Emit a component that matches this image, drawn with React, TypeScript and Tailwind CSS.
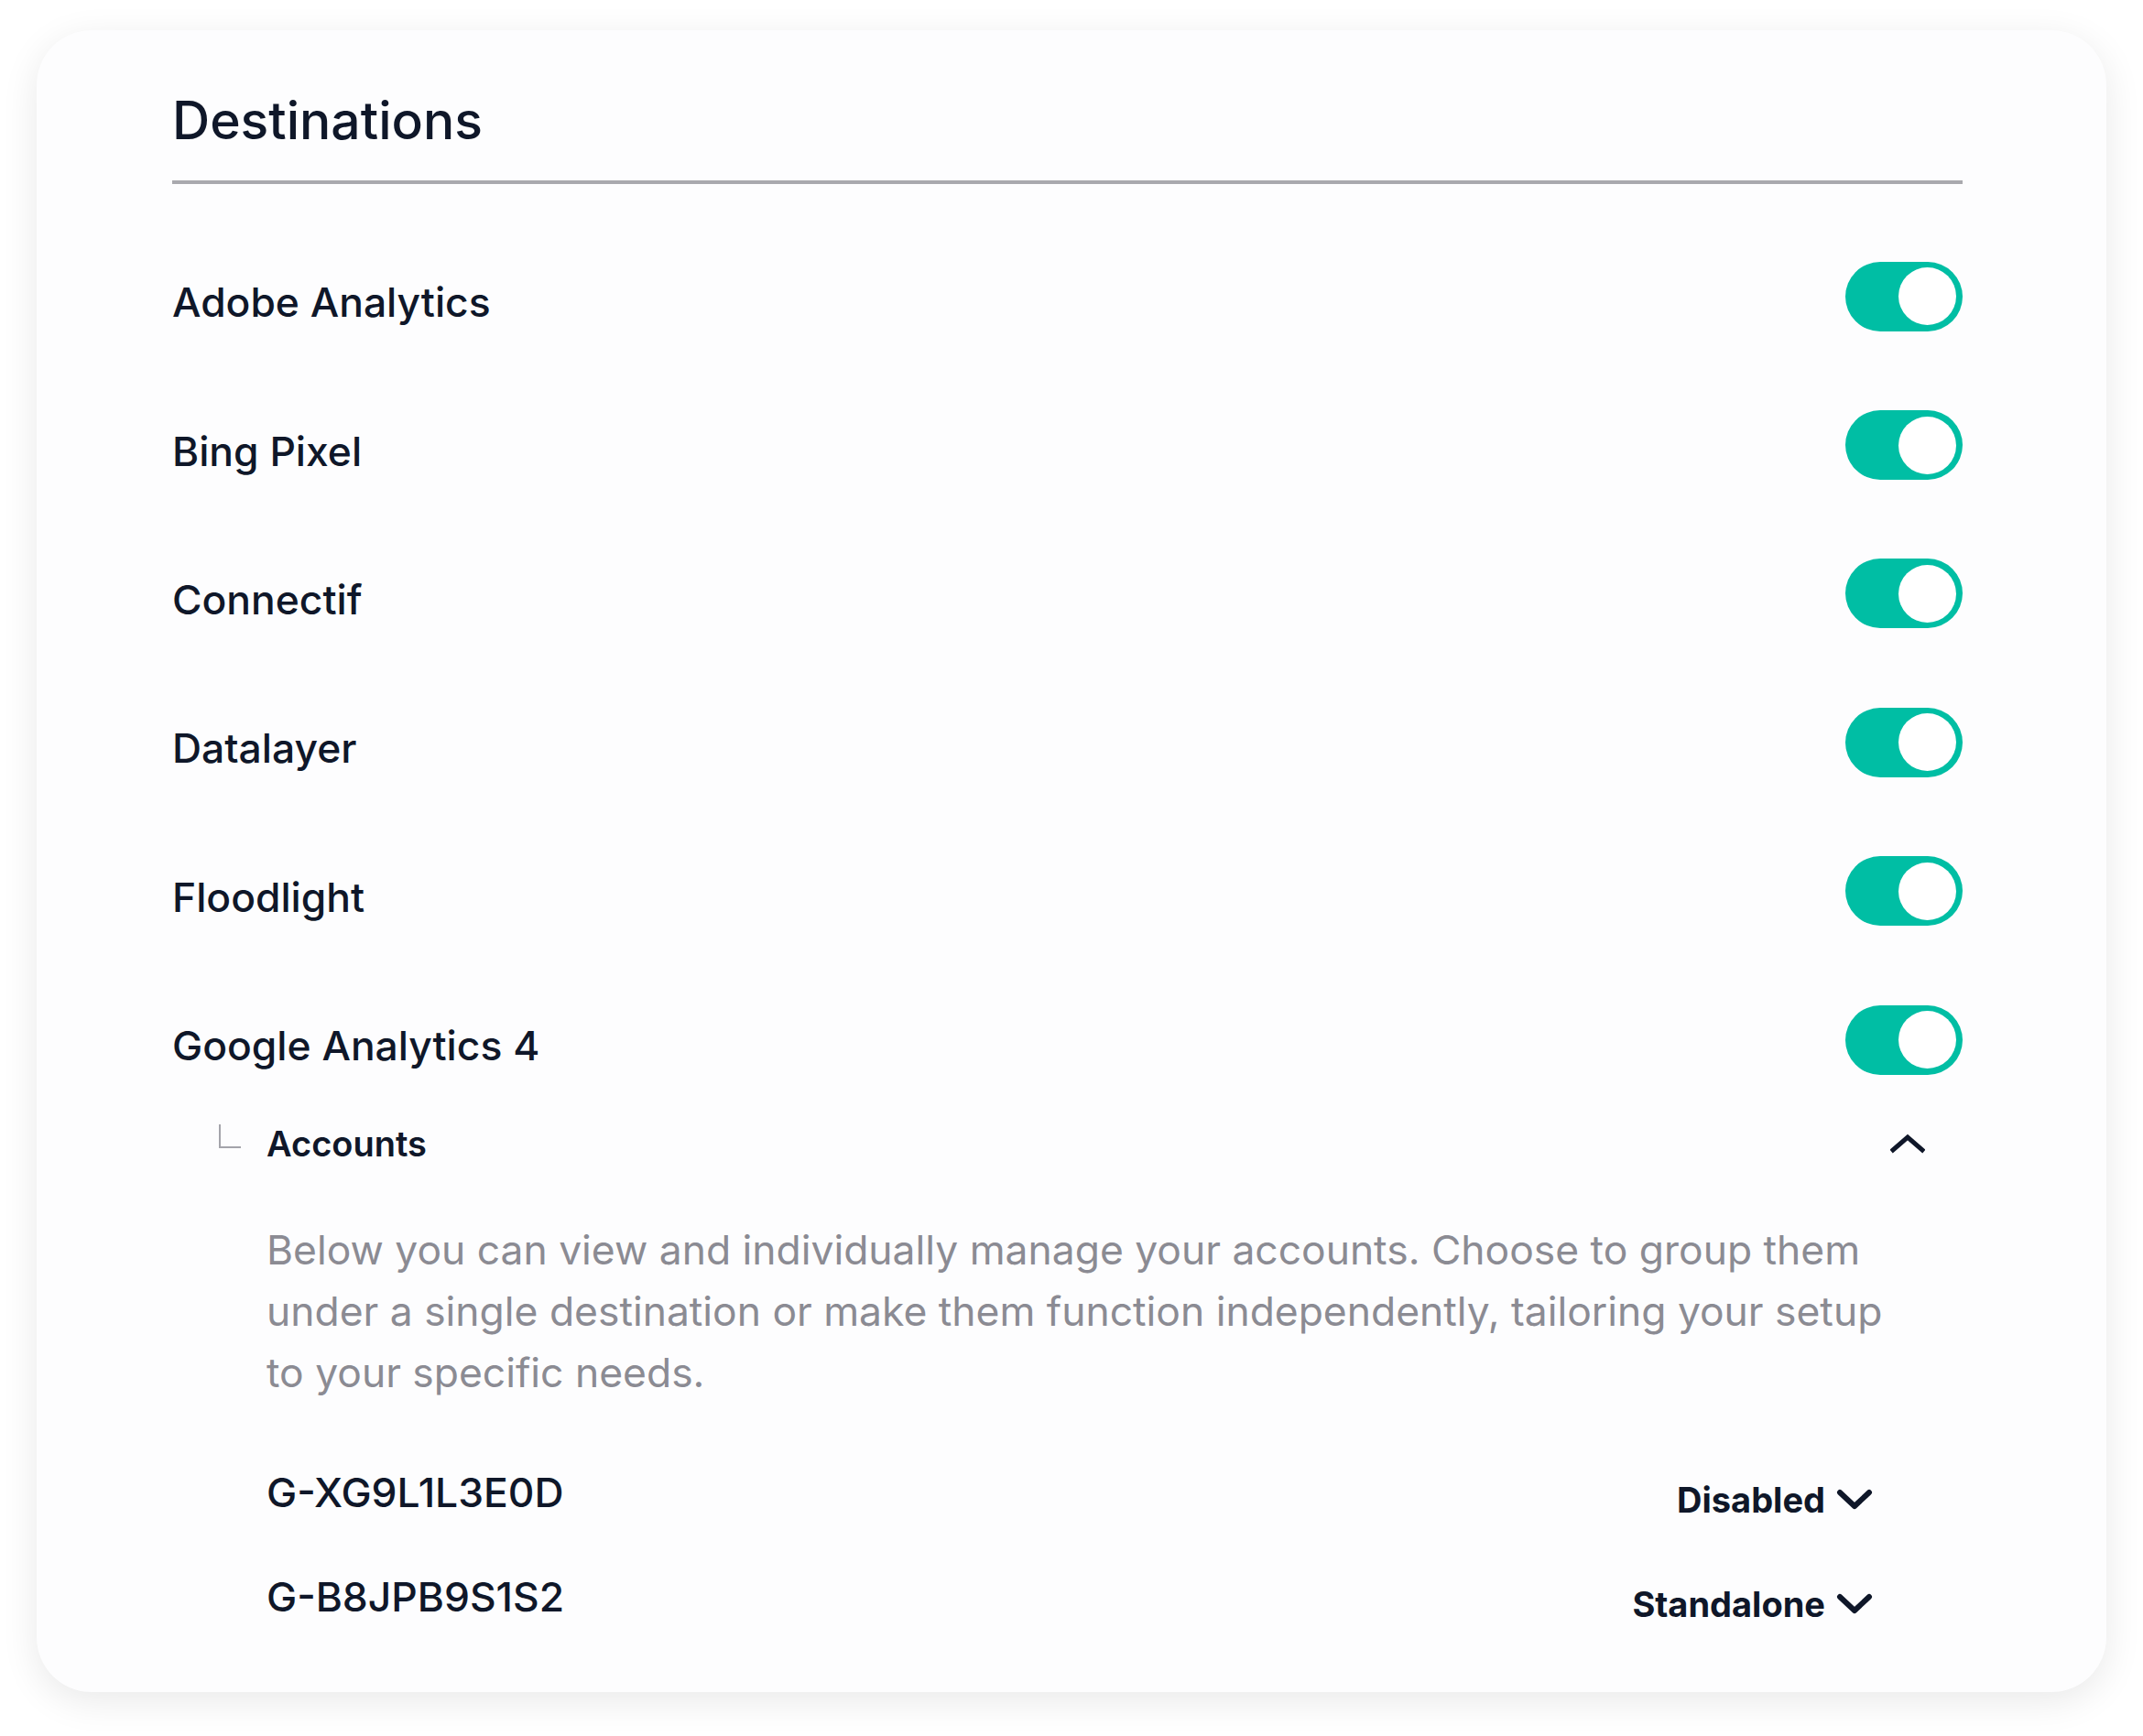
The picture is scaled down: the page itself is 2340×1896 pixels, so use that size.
import React from "react";

const rows = [
  "Adobe Analytics",
  "Bing Pixel",
  "Connectif",
  "Datalayer",
  "Floodlight",
  "Google Analytics 4",
];

function Toggle() {
  return (
    <div className="mb-[13px] flex h-[76px] w-[128px] shrink-0 items-center justify-end rounded-full bg-[#00bea4] pr-[7px]">
      <div className="h-[63px] w-[63px] rounded-full bg-white" />
    </div>
  );
}

function ChevronDown() {
  return (
    <svg width="40" height="24" viewBox="0 0 40 24" fill="none" className="shrink-0">
      <polyline
        points="4,4 20,19 36,4"
        stroke="#0f1729"
        strokeWidth="6"
        strokeLinecap="round"
        strokeLinejoin="round"
      />
    </svg>
  );
}

function ChevronUp() {
  return (
    <svg width="38" height="22" viewBox="0 0 38 22" fill="none" className="shrink-0">
      <polyline
        points="3,18 19,4 35,18"
        stroke="#0f1729"
        strokeWidth="5"
        strokeLinecap="square"
        strokeLinejoin="miter"
      />
    </svg>
  );
}

function AccountRow({ id, mode }: { id: string; mode: string }) {
  return (
    <div className="flex h-[114px] items-center justify-between pl-[103px] pr-[98px]">
      <span className="text-[44.4px] font-medium leading-[52px] text-[#0f1729]">{id}</span>
      <div className="mt-[15px] flex items-center gap-[12px]">
        <span className="text-[38px] font-bold leading-[46px] text-[#0f1729]">{mode}</span>
        <ChevronDown />
      </div>
    </div>
  );
}

export default function App() {
  return (
    <div
      className="min-h-screen bg-white px-[40px] pt-[33px] pb-[50px]"
      style={{ fontFamily: "Inter, 'Noto Sans', 'Liberation Sans', sans-serif" }}
    >
      <div className="rounded-[60px] bg-[#fdfdfe] pl-[148px] pr-[157px] pt-[65px] pb-[47px] shadow-[0_10px_40px_rgba(0,0,0,0.09)]">
        <h1 className="text-[57px] font-medium leading-[68px] text-[#0f1729]">Destinations</h1>
        <div className="mt-[31px] h-[4px] bg-[#a9a9ae]" />
        <div className="mt-[48px]">
          {rows.map((r) => (
            <div key={r} className="flex h-[162.4px] items-center justify-between">
              <span className="text-[44.4px] font-medium leading-[54px] text-[#0f1729]">{r}</span>
              <Toggle />
            </div>
          ))}
        </div>
        <div className="flex h-[52px] items-center justify-between pl-[51px] pr-[41px]">
          <div className="flex items-center">
            <div className="mb-[16px] h-[26px] w-[24px] border-b-2 border-l-2 border-[#a4a4aa]" />
            <span className="ml-[28px] text-[38px] font-semibold leading-[46px] text-[#0f1729]">Accounts</span>
          </div>
          <ChevronUp />
        </div>
        <p className="mt-[57px] pl-[103px] pr-[60px] text-[44.4px] leading-[66.6px] text-[#8b8b93]">
          Below you can view and individually manage your accounts. Choose to group them under a single
          destination or make them function independently, tailoring your setup to your specific needs.
        </p>
        <div className="mt-[41px]">
          <AccountRow id="G-XG9L1L3E0D" mode="Disabled" />
          <AccountRow id="G-B8JPB9S1S2" mode="Standalone" />
        </div>
      </div>
    </div>
  );
}
